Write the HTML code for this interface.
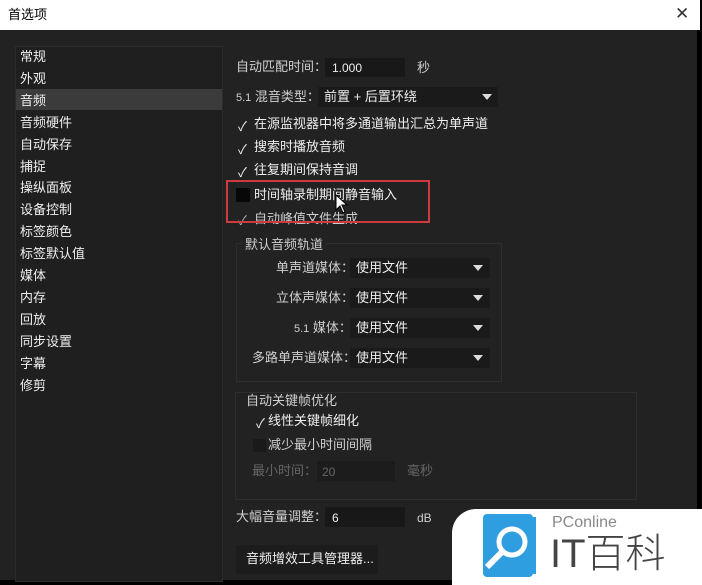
<!DOCTYPE html><html><head><meta charset="utf-8"><style>
body{margin:0;width:702px;height:583px;background:#000;overflow:hidden;font-family:"Liberation Sans","Noto Sans CJK SC",sans-serif;position:relative}
.a{position:absolute}
.t{position:absolute;color:#cfcfcf;font-size:13px;line-height:16px;white-space:nowrap}
.w{color:#eee}
.f{position:absolute;background:#181818}
.dd{position:absolute;background:#1a1a1a}
.tri{position:absolute;width:0;height:0;border-left:5px solid transparent;border-right:5px solid transparent;border-top:6px solid #ddd}
.ck{position:absolute;color:#eee;font-size:13px}
</style></head><body>
<div class="a" style="left:0;top:0;width:700px;height:30px;background:#fff"></div>
<div class="t" style="left:8px;top:7px;color:#000;font-size:13px">首选项</div>
<div class="t" style="left:675px;top:4px;color:#333;font-size:17px;line-height:20px">✕</div>
<div class="a" style="left:0;top:30px;width:697px;height:550px;background:#222"></div>
<div class="a" style="left:15px;top:46px;width:206px;height:534px;background:#1f1f1f;border:1px solid #2c2c2c"></div>
<div class="a" style="left:16px;top:89px;width:206px;height:21px;background:#3b3b3b"></div>
<div class="t w" style="left:20px;top:46px;line-height:21.9px">常规<br>外观<br>音频<br>音频硬件<br>自动保存<br>捕捉<br>操纵面板<br>设备控制<br>标签颜色<br>标签默认值<br>媒体<br>内存<br>回放<br>同步设置<br>字幕<br>修剪</div>
<div class="t" style="left:236px;top:59px">自动匹配时间：</div>
<div class="f" style="left:325px;top:58px;width:80px;height:19px"></div>
<div class="t w" style="left:332px;top:60px;font-size:12px">1.000</div>
<div class="t" style="left:417px;top:60px">秒</div>
<div class="t" style="left:236px;top:89px"><span style="font-size:11px">5.1</span> 混音类型：</div>
<div class="dd" style="left:318px;top:87px;width:180px;height:20px"></div>
<div class="t w" style="left:324px;top:89px">前置 + 后置环绕</div>
<div class="tri" style="left:482px;top:94px"></div>
<div class="ck" style="left:238px;top:116px">✓</div><div class="t w" style="left:254px;top:116px">在源监视器中将多通道输出汇总为单声道</div>
<div class="ck" style="left:238px;top:139px">✓</div><div class="t w" style="left:254px;top:139px">搜索时播放音频</div>
<div class="ck" style="left:238px;top:162px">✓</div><div class="t w" style="left:254px;top:162px">往复期间保持音调</div>
<div class="a" style="left:236px;top:188px;width:14px;height:14px;background:#080808"></div><div class="t w" style="left:254px;top:187px">时间轴录制期间静音输入</div>
<div class="ck" style="left:238px;top:210px;color:#aaa">✓</div><div class="t" style="left:254px;top:211px">自动峰值文件生成</div>
<div class="a" style="left:226px;top:180px;width:200px;height:39px;border:2px solid #d03a3e"></div>
<svg class="a" style="left:335px;top:194px" width="14" height="20"><path d="M1 1 L1 16 L5 12 L8 19 L10 18 L7 11 L12 11 Z" fill="#fff" stroke="#000"/></svg>
<div class="a" style="left:236px;top:243px;width:264px;height:137px;border:1px solid #2e2e2e"></div>
<div class="t" style="left:242px;top:237px;background:#222;padding:0 3px">默认音频轨道</div>
<div class="t" style="left:276px;top:260px">单声道媒体：</div>
<div class="t" style="left:276px;top:290px">立体声媒体：</div>
<div class="t" style="left:294px;top:320px"><span style="font-size:11px">5.1</span> 媒体：</div>
<div class="t" style="left:252px;top:350px">多路单声道媒体：</div>
<div class="dd" style="left:350px;top:258px;width:140px;height:20px"></div><div class="t w" style="left:356px;top:260px">使用文件</div><div class="tri" style="left:473px;top:265px"></div>
<div class="dd" style="left:350px;top:288px;width:140px;height:20px"></div><div class="t w" style="left:356px;top:290px">使用文件</div><div class="tri" style="left:473px;top:295px"></div>
<div class="dd" style="left:350px;top:318px;width:140px;height:20px"></div><div class="t w" style="left:356px;top:320px">使用文件</div><div class="tri" style="left:473px;top:325px"></div>
<div class="dd" style="left:350px;top:348px;width:140px;height:20px"></div><div class="t w" style="left:356px;top:350px">使用文件</div><div class="tri" style="left:473px;top:355px"></div>
<div class="a" style="left:235px;top:392px;width:400px;height:106px;border:1px solid #2e2e2e"></div>
<div class="t" style="left:243px;top:393px;background:#222;padding:0 3px">自动关键帧优化</div>
<div class="ck" style="left:256px;top:413px">✓</div><div class="t w" style="left:268px;top:413px">线性关键帧细化</div>
<div class="a" style="left:253px;top:439px;width:13px;height:13px;background:#1a1a1a"></div><div class="t" style="left:268px;top:437px">减少最小时间间隔</div>
<div class="t" style="left:252px;top:463px;color:#666">最小时间：</div>
<div class="f" style="left:317px;top:461px;width:78px;height:20px;background:#1c1c1c"></div>
<div class="t" style="left:322px;top:464px;color:#666;font-size:12px">20</div>
<div class="t" style="left:407px;top:463px;color:#666">毫秒</div>
<div class="t" style="left:236px;top:509px">大幅音量调整：</div>
<div class="f" style="left:325px;top:507px;width:80px;height:20px"></div>
<div class="t w" style="left:332px;top:510px;font-size:12px">6</div>
<div class="t" style="left:417px;top:510px;font-size:12px">dB</div>
<div class="a" style="left:236px;top:545px;width:142px;height:29px;background:#1c1c1c"></div>
<div class="t w" style="left:246px;top:551px">音频增效工具管理器...</div>
<div class="a" style="left:452px;top:509px;width:252px;height:76px;background:#fff;border-top-left-radius:24px"></div>
<svg class="a" style="left:483px;top:514px" width="60" height="64"><rect x="0" y="0" width="50" height="63" rx="4" fill="#2f9ee0"/><rect x="50" y="3" width="3" height="57" fill="#2f9ee0"/><circle cx="29" cy="28" r="13" fill="none" stroke="#fff" stroke-width="5"/><path d="M19 38 L4 53" stroke="#fff" stroke-width="6"/></svg>
<div class="t" style="left:552px;top:514px;color:#888;font-size:16px;line-height:18px">PConline</div>
<div class="t" style="left:550px;top:531px;color:#444;font-size:40px;line-height:46px;font-weight:300">IT百科</div>
</body></html>
